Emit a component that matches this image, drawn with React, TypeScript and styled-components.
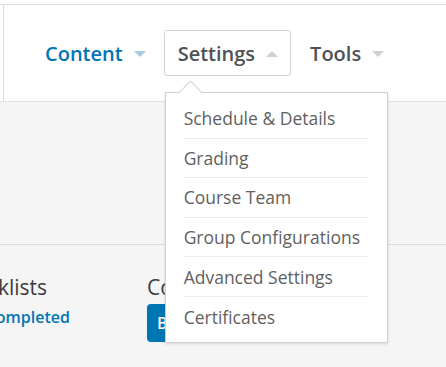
import styled, { createGlobalStyle } from "styled-components";

const GlobalStyle = createGlobalStyle`
  html, body {
    margin: 0;
    padding: 0;
    background: #ffffff;
    font-family: "Open Sans", "Liberation Sans", sans-serif;
  }
  body {
    width: 446px;
    height: 367px;
    overflow: hidden;
  }
`;

const Page = styled.div`
  padding-top: 4px;
  background: #fff;
`;

const Header = styled.header`
  border-top: 1px solid #dcdcdc;
  border-bottom: 1px solid #e2e2e2;
  background: #fff;
`;

const HeaderInner = styled.div`
  margin-left: 3px;
  border-left: 1px solid #dedede;
  height: 96px;
  display: flex;
  align-items: center;
  padding-left: 27px;
`;

const Nav = styled.nav`
  display: flex;
  align-items: center;
  gap: 5px;
`;

const NavItem = styled.div`
  position: relative;
`;

const NavButton = styled.div<{ $active?: boolean; $current?: boolean }>`
  display: flex;
  align-items: center;
  gap: 11px;
  height: 46px;
  box-sizing: border-box;
  padding: 0 12px 0 13px;
  border: 1px solid ${(p) => (p.$active ? "#d2d2d2" : "transparent")};
  border-radius: 3px;
  font-size: 20px;
  font-weight: 600;
  color: ${(p) => (p.$current ? "#0075b4" : "#4e5156")};
`;

const Caret = styled.span<{ $up?: boolean; $color: string }>`
  width: 0;
  height: 0;
  border-left: 6px solid transparent;
  border-right: 6px solid transparent;
  ${(p) =>
    p.$up
      ? `border-bottom: 6px solid ${p.$color};`
      : `border-top: 6px solid ${p.$color};`}
  margin-top: 1px;
`;

const Menu = styled.ul`
  position: absolute;
  top: 62px;
  left: 1px;
  width: 223px;
  box-sizing: border-box;
  margin: 0;
  padding: 6px 20px 5px 18px;
  list-style: none;
  background: #fff;
  border: 1px solid #d0d0d0;
  box-shadow: 0 1px 3px rgba(0, 0, 0, 0.12);
  z-index: 2;

  &::before {
    content: "";
    position: absolute;
    top: -9px;
    left: 16px;
    width: 16px;
    height: 16px;
    background: #fff;
    border-top: 1px solid #d0d0d0;
    border-left: 1px solid #d0d0d0;
    transform: rotate(45deg);
  }
`;

const MenuItem = styled.li`
  position: relative;
  height: 39.6px;
  box-sizing: border-box;
  display: flex;
  align-items: center;
  font-size: 17.5px;
  color: #5f5f5f;
  white-space: nowrap;
  border-bottom: 1px solid #ececec;

  &:last-child {
    border-bottom: none;
  }
`;

const Main = styled.main`
  background: #f5f5f5;
  height: 266px;
`;

const Banner = styled.div`
  height: 142px;
  border-bottom: 1px solid #dedede;
`;

const Sidebar = styled.div`
  display: flex;
  gap: 40px;
  padding-top: 28px;
  margin-left: -50px;
`;

const Block = styled.div<{ $width?: number }>`
  display: flex;
  flex-direction: column;
  flex: none;
  width: ${(p) => (p.$width ? `${p.$width}px` : "auto")};
`;

const BlockTitle = styled.h3`
  margin: 0;
  font-size: 21px;
  font-weight: 400;
  color: #3c3c3c;
  line-height: 28px;
  white-space: nowrap;
`;

const BlockLink = styled.span`
  margin-top: 5px;
  font-size: 16px;
  font-weight: 600;
  color: #0075b4;
  white-space: nowrap;
`;

const BlueButton = styled.span`
  margin-top: 3px;
  height: 38px;
  display: inline-flex;
  align-items: center;
  padding: 0 10px;
  border-radius: 4px;
  background: #0075b4;
  color: #fff;
  font-size: 16px;
  font-weight: 600;
  width: fit-content;
`;

const settingsLinks = [
  "Schedule & Details",
  "Grading",
  "Course Team",
  "Group Configurations",
  "Advanced Settings",
  "Certificates",
];

export default function App() {
  return (
    <Page>
      <GlobalStyle />
      <Header>
        <HeaderInner>
          <Nav>
            <NavItem>
              <NavButton $current>
                Content
                <Caret $color="#a8cbe3" />
              </NavButton>
            </NavItem>
            <NavItem>
              <NavButton $active>
                Settings
                <Caret $up $color="#d0d0d0" />
              </NavButton>
              <Menu>
                {settingsLinks.map((label) => (
                  <MenuItem key={label}>{label}</MenuItem>
                ))}
              </Menu>
            </NavItem>
            <NavItem>
              <NavButton>
                Tools
                <Caret $color="#d0d0d0" />
              </NavButton>
            </NavItem>
          </Nav>
        </HeaderInner>
      </Header>
      <Main>
        <Banner />
        <Sidebar>
          <Block $width={157}>
            <BlockTitle>Checklists</BlockTitle>
            <BlockLink>0/12 completed</BlockLink>
          </Block>
          <Block>
            <BlockTitle>Course Start</BlockTitle>
            <BlueButton>Browse</BlueButton>
          </Block>
        </Sidebar>
      </Main>
    </Page>
  );
}
